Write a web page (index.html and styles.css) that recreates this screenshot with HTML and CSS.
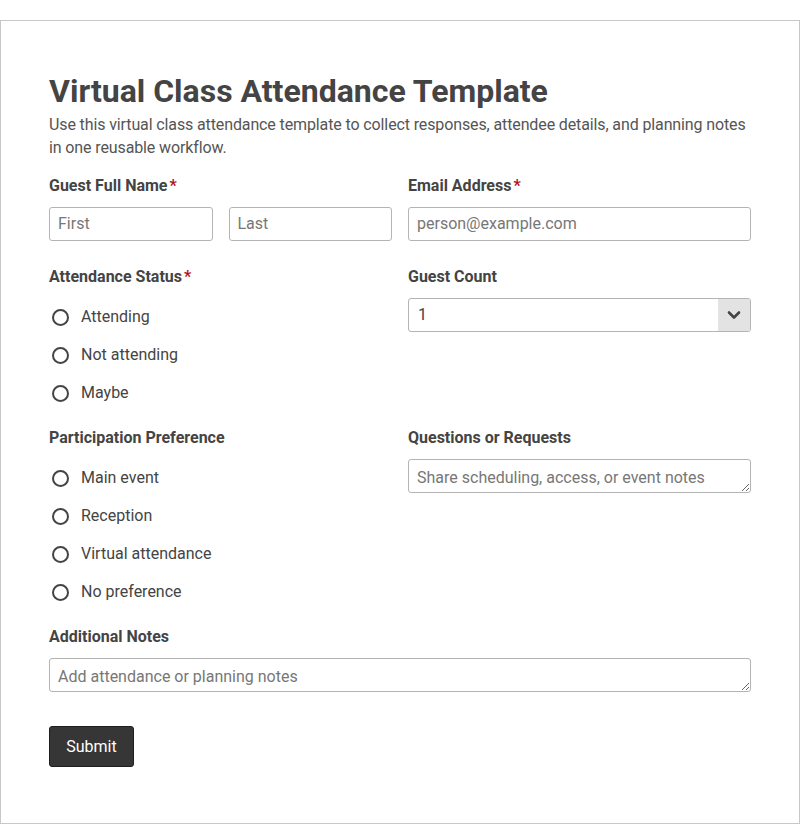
FILE: index.html
```html
<!DOCTYPE html>
<html lang="en">
<head>
<meta charset="utf-8">
<title>Virtual Class Attendance Template</title>
<link rel="stylesheet" href="styles.css">
</head>
<body>
<div class="card">
  <h1 class="title">Virtual Class Attendance Template</h1>
  <p class="desc">Use this virtual class attendance template to collect responses, attendee details, and planning notes in one reusable workflow.</p>
  <form class="form">
    <div class="row">
      <div class="field">
        <label class="label">Guest Full Name<span class="req">*</span></label>
        <div class="name-pair">
          <input class="input" type="text" placeholder="First">
          <input class="input" type="text" placeholder="Last">
        </div>
      </div>
      <div class="field">
        <label class="label">Email Address<span class="req">*</span></label>
        <input class="input" type="email" placeholder="person@example.com">
      </div>
    </div>
    <div class="row">
      <div class="field">
        <label class="label">Attendance Status<span class="req">*</span></label>
        <div class="radios">
          <label class="radio"><span class="dot"></span>Attending</label>
          <label class="radio"><span class="dot"></span>Not attending</label>
          <label class="radio"><span class="dot"></span>Maybe</label>
        </div>
      </div>
      <div class="field">
        <label class="label">Guest Count</label>
        <div class="select">
          <span class="select-value">1</span>
          <span class="select-arrow"><svg width="14" height="10" viewBox="0 0 14 10"><path d="M2 2.5 L7 7.5 L12 2.5" fill="none" stroke="#444" stroke-width="2.6" stroke-linecap="round" stroke-linejoin="round"/></svg></span>
        </div>
      </div>
    </div>
    <div class="row">
      <div class="field">
        <label class="label">Participation Preference</label>
        <div class="radios">
          <label class="radio"><span class="dot"></span>Main event</label>
          <label class="radio"><span class="dot"></span>Reception</label>
          <label class="radio"><span class="dot"></span>Virtual attendance</label>
          <label class="radio"><span class="dot"></span>No preference</label>
        </div>
      </div>
      <div class="field">
        <label class="label">Questions or Requests</label>
        <textarea class="input area" rows="1" placeholder="Share scheduling, access, or event notes"></textarea>
      </div>
    </div>
    <div class="field full">
      <label class="label">Additional Notes</label>
      <textarea class="input area" rows="1" placeholder="Add attendance or planning notes"></textarea>
    </div>
    <div class="actions">
      <button class="btn" type="button">Submit</button>
    </div>
  </form>
</div>
</body>
</html>
```
FILE: styles.css
```css
* { box-sizing: border-box; }
html, body { margin: 0; padding: 0; background: #fff; }
body {
  font-family: Roboto, "Liberation Sans", sans-serif;
  color: #444;
  padding-top: 20px;
}
.card {
  width: 800px;
  height: 804px;
  border: 1px solid #c8c8c8;
  padding: 51px 48px 0 48px;
}
.title {
  margin: 0;
  font-size: 32px;
  line-height: 38px;
  font-weight: 700;
  color: #444;
}
.desc {
  margin: 3px 0 0 0;
  font-size: 16px;
  line-height: 23px;
  letter-spacing: -0.12px;
  color: #555;
}
.form {
  margin-top: 16px;
  display: flex;
  flex-direction: column;
}
.row {
  display: grid;
  grid-template-columns: 1fr 1fr;
  column-gap: 16px;
  margin-bottom: 25px;
}
.field { display: flex; flex-direction: column; }
.label {
  font-size: 16px;
  line-height: 20px;
  font-weight: 700;
  color: #444;
  padding-top: 1px;
  margin-bottom: 11px;
}
.req { color: #b3141b; margin-left: 2px; }
.name-pair {
  display: grid;
  grid-template-columns: 1fr 1fr;
  column-gap: 16px;
}
.input {
  width: 100%;
  height: 34px;
  border: 1px solid #b4b4b4;
  border-radius: 3px;
  padding: 0 8px 1px 8px;
  font-family: Roboto, "Liberation Sans", sans-serif;
  font-size: 16px;
  color: #444;
  background: #fff;
  outline: none;
}
.input::placeholder { color: #777; }
.area {
  display: block;
  padding: 8px 8px 4px 8px;
  line-height: 20px;
  resize: vertical;
}
.radios {
  display: flex;
  flex-direction: column;
  gap: 20px;
  margin-top: 10px;
}
.radio {
  display: flex;
  align-items: center;
  height: 18px;
  font-size: 16px;
  line-height: 18px;
  color: #444;
}
.dot {
  width: 17px;
  height: 17px;
  border: 2px solid #444;
  border-radius: 50%;
  margin-left: 3px;
  margin-right: 12px;
  flex: none;
}
.select {
  display: flex;
  height: 34px;
  border: 1px solid #b4b4b4;
  border-radius: 3px;
  overflow: hidden;
  font-size: 16px;
}
.select-value {
  flex: 1;
  display: flex;
  align-items: center;
  padding-left: 9px;
  padding-bottom: 1px;
  color: #444;
}
.select-arrow {
  width: 32px;
  background: #e3e3e3;
  display: flex;
  align-items: center;
  justify-content: center;
}
.full { margin-bottom: 34px; }
.btn {
  height: 41px;
  width: 85px;
  padding: 0;
  background: #363636;
  color: #fff;
  border: 1px solid #1e1e1e;
  border-radius: 3px;
  font-family: Roboto, "Liberation Sans", sans-serif;
  font-size: 16px;
  cursor: pointer;
}
```
